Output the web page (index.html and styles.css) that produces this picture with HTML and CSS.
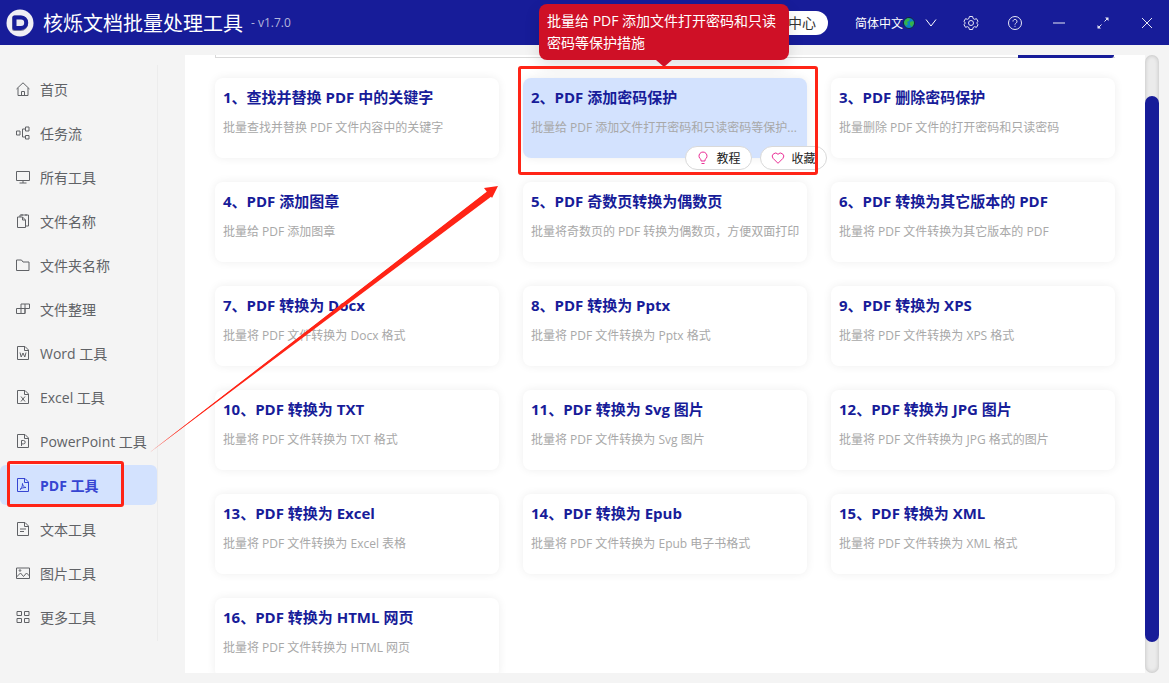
FILE: index.html
```
<!DOCTYPE html>
<html lang="zh-CN">
<head>
  <meta charset="UTF-8" />
  <meta name="viewport" content="width=device-width, initial-scale=1.0"/>
  <title>核烁文档批量处理工具</title>
  <link rel="stylesheet" href="styles.css">
</head>
<body>

<header class="topbar">
  <svg class="logo" viewBox="0 0 28 28">
    <circle cx="14" cy="14" r="13.5" fill="#f0eff4"/>
    <path d="M8.500 9h6a5.200 5.200 0 0 1 0 10.400h-6z" fill="#e9e8f0" stroke="#77789c" stroke-width="5" stroke-linejoin="round"/>
    <path d="M8.500 8.500h6.500a5.200 5.200 0 0 1 0 10.400H8.500z" fill="#e9e8f0" stroke="#171c99" stroke-width="4" stroke-linejoin="round"/>
  </svg>
  <h1 class="app-name">核烁文档批量处理工具</h1>
  <span class="version">- v1.7.0</span>
  <div class="topbar-right">
    <button type="button" class="center-btn">中心</button>
    <button type="button" class="lang-btn">简体中文
      <svg class="globe" viewBox="0 0 12 12"><circle cx="6" cy="6" r="5.5" fill="#0d82c4" stroke="#17253a"/><path d="M2 3l3-2 2 1-1 2-2 1 1 2-2 2-2-3zM7 5l3-1 1 2-2 4-2-2z" fill="#35b44a"/></svg>
      <svg class="chevron" viewBox="0 0 12 12"><path d="M1 2.5l5 6.5 5-6.5"/></svg>
    </button>
    <button type="button" class="icon-btn" aria-label="设置">
      <svg viewBox="0 0 16 16"><path d="M6.400 1.500h3.200l.5 2 1.400.8 2-.6 1.600 2.800-1.500 1.400v.2l1.500 1.400-1.600 2.800-2-.6-1.400.8-.5 2H6.400l-.5-2-1.400-.8-2 .6L.9 9.500l1.500-1.400v-.2L.9 6.500l1.600-2.800 2 .6 1.400-.8z"/><circle cx="8" cy="8" r="2.500"/></svg>
    </button>
    <button type="button" class="icon-btn" aria-label="帮助">
      <svg viewBox="0 0 16 16"><circle cx="8" cy="8" r="6.500"/><path d="M6 6.500a2 2 0 1 1 3.200 1.500C8.300 8.600 8 8.900 8 9.700M8 10.800v1"/></svg>
    </button>
    <button type="button" class="icon-btn" aria-label="最小化">
      <svg viewBox="0 0 16 16"><path d="M2 8h12"/></svg>
    </button>
    <button type="button" class="icon-btn" aria-label="最大化">
      <svg viewBox="0 0 16 16"><path d="M9.500 6.500l3-3M6.500 9.500l-3 3"/><path d="M13.500 2.500v3.500L10 2.500zM2.500 13.500V10L6 13.500z" fill="currentColor" stroke="none"/></svg>
    </button>
    <button type="button" class="icon-btn" aria-label="关闭">
      <svg viewBox="0 0 16 16"><path d="M3 3l10 10M13 3L3 13"/></svg>
    </button>
  </div>
</header>

<div class="layout">
  <nav class="sidebar">
    <a href="#" class="nav-item">
      <svg viewBox="0 0 16 16"><path d="M1.500 8L8 1.800 14.500 8M3 7v7.500h10V7M6.500 14.500v-4h3v4"/></svg>首页</a>
    <a href="#" class="nav-item">
      <svg viewBox="0 0 16 16"><path d="M1.500 6h3.500v4H1.500zM10.500 2H14v4h-3.500zM10.500 10.500H14V14h-3.500zM10.500 4h-3v8h3"/></svg>任务流</a>
    <a href="#" class="nav-item">
      <svg viewBox="0 0 16 16"><path d="M1.500 2.500h13v9h-13zM8 11.500v2.500M4.500 14h7"/></svg>所有工具</a>
    <a href="#" class="nav-item">
      <svg viewBox="0 0 16 16"><path d="M2.500 4h5l3 3v7.500h-8zM7.500 4v3h3M5 4V2h8.500v11h-3M7 1v2M11 1v2"/></svg>文件名称</a>
    <a href="#" class="nav-item">
      <svg viewBox="0 0 16 16"><path d="M1.500 3h5l1.500 2h6v8.500H1.500z"/></svg>文件夹名称</a>
    <a href="#" class="nav-item">
      <svg viewBox="0 0 16 16"><path d="M6 3h8.500v4.500H6zM10 3v9.500M1.500 7.500H10v5H1.500zM6 7.500v5"/></svg>文件整理</a>
    <a href="#" class="nav-item">
      <svg viewBox="0 0 16 16"><path d="M2.500 1.500h7.500l3.500 3.500v9.500h-11zM9.500 1.500v4h4M5 7.500l1.200 4.500L8 8l1.800 4L11 7.500"/></svg>Word 工具</a>
    <a href="#" class="nav-item">
      <svg viewBox="0 0 16 16"><path d="M2.500 1.500h7.500l3.500 3.500v9.500h-11zM9.500 1.500v4h4M6 7.500l4 5M10 7.500l-4 5"/></svg>Excel 工具</a>
    <a href="#" class="nav-item">
      <svg viewBox="0 0 16 16"><path d="M2.500 1.500h7.500l3.500 3.500v9.500h-11zM9.500 1.500v4h4M6.500 13V7.500h2a1.700 1.700 0 0 1 0 3.400h-2"/></svg>PowerPoint 工具</a>
    <a href="#" class="nav-item active">
      <svg viewBox="0 0 16 16"><path d="M2.500 1.500h7.500l3.500 3.500v9.500h-11zM9.500 1.500v4h4M7.500 6.500c0 3-1 5-2.500 6 1.500-1.500 3.500-2 6-2-2 0-3.500-2-3.500-4"/></svg>PDF 工具<span class="mark mark-nav"></span></a>
    <a href="#" class="nav-item">
      <svg viewBox="0 0 16 16"><path d="M2.500 1.500h7.500l3.500 3.500v9.500h-11zM9.500 1.500v4h4M5 8h6M5 10.500h4"/></svg>文本工具</a>
    <a href="#" class="nav-item">
      <svg viewBox="0 0 16 16"><path d="M1.500 3h13v10.500h-13zM1.500 12l4-4 3 3.500 3-3.500 3 3"/><circle cx="5" cy="5.500" r=".8"/></svg>图片工具</a>
    <a href="#" class="nav-item">
      <svg viewBox="0 0 16 16"><path d="M2 2.500h4.500v4H2zM9.500 2.500H14v4H9.500zM2 9.500h4.500v4H2zM9.500 9.500H14v4H9.500z"/></svg>更多工具</a>
  </nav>

  <main class="content">
    <div class="search-line"><span class="search-end"></span></div>
    <div class="cards">
      <article class="card"><h2>1、查找并替换 PDF 中的关键字</h2><p>批量查找并替换 PDF 文件内容中的关键字</p></article>
      <article class="card selected">
        <h2>2、PDF 添加密码保护</h2><p>批量给 PDF 添加文件打开密码和只读密码等保护...</p>
        <div class="card-actions">
          <button type="button"><svg viewBox="0 0 14 14"><path d="M5 10V8.500a4 4 0 1 1 4 0V10zM5.500 12.500h3"/></svg>教程</button>
          <button type="button"><svg viewBox="0 0 14 14"><path d="M7 12.300L2 7.300a3 3 0 0 1 5-4 3 3 0 0 1 5 4z"/></svg>收藏</button>
        </div>
        <div class="tooltip" role="tooltip">批量给 PDF 添加文件打开密码和只读密码等保护措施</div>
        <span class="mark mark-card"></span>
      </article>
      <article class="card"><h2>3、PDF 删除密码保护</h2><p>批量删除 PDF 文件的打开密码和只读密码</p></article>
      <article class="card"><h2>4、PDF 添加图章</h2><p>批量给 PDF 添加图章</p></article>
      <article class="card"><h2>5、PDF 奇数页转换为偶数页</h2><p>批量将奇数页的 PDF 转换为偶数页，方便双面打印</p></article>
      <article class="card"><h2>6、PDF 转换为其它版本的 PDF</h2><p>批量将 PDF 文件转换为其它版本的 PDF</p></article>
      <article class="card"><h2>7、PDF 转换为 Docx</h2><p>批量将 PDF 文件转换为 Docx 格式</p></article>
      <article class="card"><h2>8、PDF 转换为 Pptx</h2><p>批量将 PDF 文件转换为 Pptx 格式</p></article>
      <article class="card"><h2>9、PDF 转换为 XPS</h2><p>批量将 PDF 文件转换为 XPS 格式</p></article>
      <article class="card"><h2>10、PDF 转换为 TXT</h2><p>批量将 PDF 文件转换为 TXT 格式</p></article>
      <article class="card"><h2>11、PDF 转换为 Svg 图片</h2><p>批量将 PDF 文件转换为 Svg 图片</p></article>
      <article class="card"><h2>12、PDF 转换为 JPG 图片</h2><p>批量将 PDF 文件转换为 JPG 格式的图片</p></article>
      <article class="card"><h2>13、PDF 转换为 Excel</h2><p>批量将 PDF 文件转换为 Excel 表格</p></article>
      <article class="card"><h2>14、PDF 转换为 Epub</h2><p>批量将 PDF 文件转换为 Epub 电子书格式</p></article>
      <article class="card"><h2>15、PDF 转换为 XML</h2><p>批量将 PDF 文件转换为 XML 格式</p></article>
      <article class="card"><h2>16、PDF 转换为 HTML 网页</h2><p>批量将 PDF 文件转换为 HTML 网页</p></article>
    </div>
  </main>
  <div class="scrollbar"><div class="thumb"></div></div>
</div>

<svg class="arrow" viewBox="0 0 350 268"><path d="M0 267L338 6 335 2 349 0 343 12 341 9 0 267z" fill="#ff2416"/><path d="M0 267L340 4 343 10z" fill="#ff2416"/></svg>

</body>
</html>
```

FILE: styles.css
```
* {
  box-sizing: border-box;
}

body {
  margin: 0;
  height: 100vh;
  overflow: hidden;
  display: flex;
  flex-direction: column;
  position: relative;
  background: #f4f4f4;
  font-family: "Open Sans", "Noto Sans CJK SC", sans-serif;
  font-size: 14px;
  color: #606266;
}

button {
  border: none;
  background: none;
  padding: 0;
  font-family: inherit;
  cursor: pointer;
}

svg {
  fill: none;
  stroke: currentColor;
}

/* topbar */
.topbar {
  display: flex;
  align-items: center;
  flex-shrink: 0;
  height: 45px;
  padding: 0 12px 0 6px;
  background: #171c99;
  color: white;
}

.logo {
  width: 28px;
  height: 28px;
  stroke: none;
}

.app-name {
  margin: 0 8px 0 9px;
  font-size: 20px;
  font-weight: normal;
}

.version {
  font-size: 12px;
  color: #b4b6dc;
}

.topbar-right {
  display: flex;
  align-items: center;
  gap: 24px;
  margin-left: auto;
}

.center-btn {
  height: 24px;
  margin-right: 3px;
  padding: 0 12px 0 32px;
  border-radius: 12px;
  background: white;
  font-size: 14px;
  line-height: 24px;
  color: #333;
}

.lang-btn {
  display: flex;
  align-items: center;
  font-size: 12px;
  color: white;
}

.globe {
  width: 12px;
  height: 12px;
  stroke: none;
}

.chevron {
  width: 12px;
  height: 12px;
  margin-left: 10px;
}

.icon-btn {
  width: 20px;
  height: 20px;
  color: #e8e8f5;
}

.icon-btn svg {
  display: block;
  width: 16px;
  height: 16px;
  margin: auto;
}

/* layout */
.layout {
  flex: 1;
  min-height: 0;
  display: flex;
  padding: 10px 10px 10px 0;
}

.sidebar {
  align-self: flex-start;
  width: 158px;
  margin: 10px 27px 0 0;
  padding-top: 4px;
  border-right: 1px solid #ececec;
}

.nav-item {
  position: relative;
  display: flex;
  align-items: center;
  height: 40px;
  margin-bottom: 4px;
  padding-left: 15px;
  border-radius: 6px;
  color: #606266;
  text-decoration: none;
}

.nav-item svg {
  width: 16px;
  height: 16px;
  margin-right: 9px;
}

.nav-item.active {
  background: #d3e2fe;
  color: #3645d2;
  font-weight: bold;
}

.content {
  position: relative;
  flex: 1;
  min-width: 0;
  padding: 0 30px;
  background: white;
  clip-path: inset(-60px 0 0 0);
}

.search-line {
  display: flex;
  justify-content: flex-end;
  height: 3px;
  margin-bottom: 20px;
  padding-right: 1px;
  border-bottom: 1px solid #d9d9d9;
  border-left: 1px solid #d9d9d9;
}

.search-end {
  width: 96px;
  height: 3px;
  border-radius: 0 0 3px 0;
  background: #171c99;
}

.cards {
  display: grid;
  grid-template-columns: repeat(3, minmax(0, 1fr));
  gap: 24px;
}

.card {
  position: relative;
  height: 80px;
  padding: 8px 4px 8px 8px;
  border-radius: 8px;
  background: white;
  box-shadow: 0 0 10px rgba(0,0,0,0.07);
}

.card h2 {
  margin: 0 0 10px;
  font-size: 15px;
  line-height: 22px;
  color: #171c99;
}

.card p {
  margin: 0;
  font-size: 12px;
  line-height: 20px;
  color: #a8a8a8;
  white-space: nowrap;
  overflow: hidden;
  text-overflow: ellipsis;
}

.card.selected {
  z-index: 1;
  background: #d3e2fe;
}

.card-actions {
  position: absolute;
  right: -20px;
  bottom: -12px;
  display: flex;
  gap: 8px;
}

.card-actions button {
  display: flex;
  align-items: center;
  justify-content: center;
  gap: 6px;
  width: 67px;
  height: 24px;
  border: 1px solid #d9d9d9;
  border-radius: 12px;
  background: white;
  font-size: 12px;
  color: #222;
}

.card-actions svg {
  width: 14px;
  height: 14px;
  color: #eb2f96;
}

.tooltip {
  position: absolute;
  bottom: calc(100% + 18px);
  left: 50%;
  width: 250px;
  margin-left: -126px;
  padding: 6px 8px;
  border-radius: 8px;
  background: #cf1026;
  color: white;
  font-size: 14px;
  line-height: 22px;
  box-shadow: 0 6px 16px rgba(0,0,0,0.12);
}

.tooltip::after {
  content: "";
  position: absolute;
  top: 100%;
  left: 50%;
  margin-left: -8px;
  border: 8px solid transparent;
  border-top: 7px solid #cf1026;
  border-bottom: none;
}

/* red marks */
.mark {
  position: absolute;
  border: 3px solid #ff2416;
  border-radius: 3px;
}

.mark-nav {
  top: -4px;
  bottom: -2px;
  left: 7px;
  width: 117px;
}

.mark-card {
  top: -12px;
  right: -11px;
  bottom: -17px;
  left: -5px;
}

.arrow {
  position: absolute;
  top: 186px;
  left: 149px;
  width: 350px;
  height: 268px;
  stroke: none;
  pointer-events: none;
}

/* scrollbar */
.scrollbar {
  width: 14px;
  padding-top: 41px;
  border-radius: 7px;
  background: #ebebeb;
  box-shadow: inset 0 0 4px rgba(0,0,0,0.2);
}

.thumb {
  height: 546px;
  border-radius: 7px;
  background: #171c99;
}
```
